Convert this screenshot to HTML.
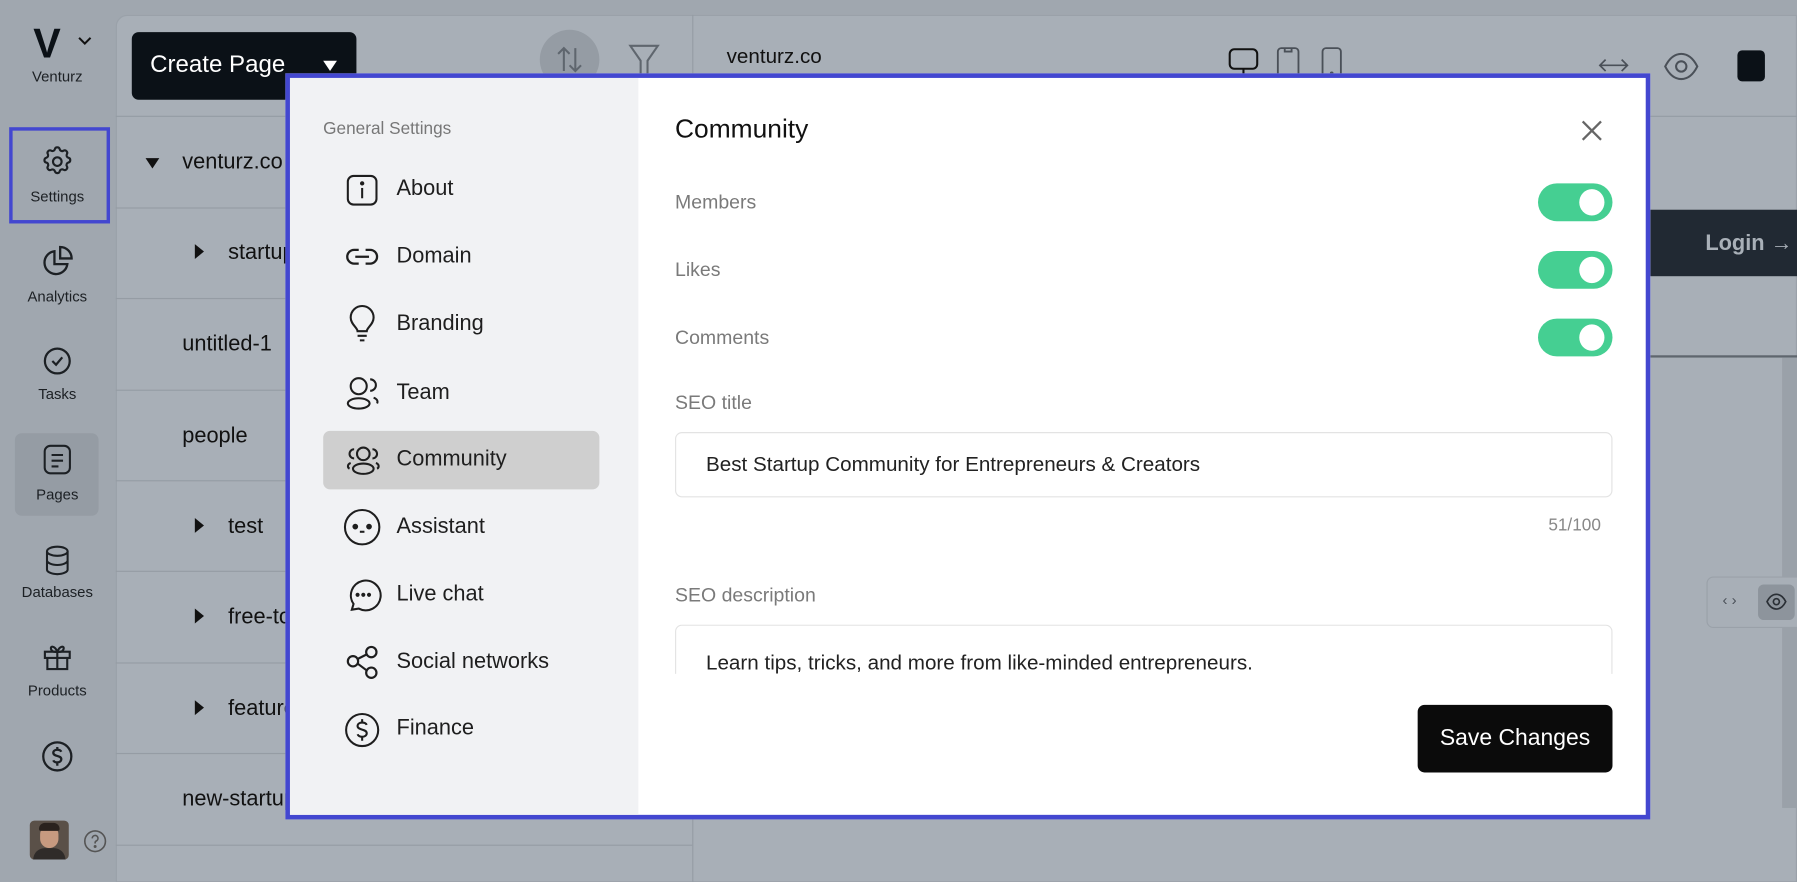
<!DOCTYPE html>
<html><head><meta charset="utf-8"><style>
*{box-sizing:border-box;margin:0;padding:0}
html,body{width:1797px;height:882px;overflow:hidden;background:#a0a7af}
#w{position:absolute;left:0;top:0;width:1568px;height:770px;transform:scale(1.14605);transform-origin:0 0;font-family:"Liberation Sans",sans-serif;background:#a0a7af;overflow:hidden}
.a{position:absolute}
.t{position:absolute;white-space:nowrap}
svg{position:absolute;overflow:visible}
.side{font-size:13px;color:#1c2024;text-align:center;width:100px;left:0}
.mid{font-size:19px;color:#111}
.hl{position:absolute;left:101px;width:503px;height:1px;background:#959ca4}
.mi{font-size:19px;color:#1e1e1e;left:346px}
.lab{font-size:17px;color:#7a7a7a;left:589px}
.tg{position:absolute;left:1342px;width:65px;height:33px;border-radius:17px;background:#45cf92}
.tg:after{content:"";position:absolute;right:7px;top:5px;width:22px;height:23px;border-radius:50%;background:#fff}
</style></head><body><div id="w">
<div class="a" style="left:101px;top:13px;width:1467px;height:757px;background:#a8afb7;border-top-left-radius:10px;border:1px solid #9aa1a9"></div>
<div class="a" style="left:604px;top:13px;width:1px;height:757px;background:#959ca4"></div>
<div class="a" style="left:605px;top:101px;width:963px;height:1px;background:#959ca4"></div>
<div class="hl" style="top:101px"></div><div class="hl" style="top:181px"></div><div class="hl" style="top:260px"></div><div class="hl" style="top:340px"></div><div class="hl" style="top:419px"></div><div class="hl" style="top:498px"></div><div class="hl" style="top:578px"></div><div class="hl" style="top:657px"></div><div class="hl" style="top:737px"></div>
<div class="t" style="left:29px;top:17px;font-size:36px;font-weight:bold;color:#0b1117;letter-spacing:-2px">V</div>
<svg style="left:68px;top:32px" width="12" height="8"><path d="M1 1l5 5 5-5" stroke="#111" stroke-width="1.8" fill="none"/></svg>
<div class="t side" style="top:59px">Venturz</div>
<div class="a" style="left:8px;top:111px;width:88px;height:84px;border:3px solid #4347d0"></div>
<svg style="left:35px;top:126px" width="30" height="30" viewBox="0 0 24 24" fill="none" stroke="#1c2024" stroke-width="1.5"><path d="M10.3 3.3c.4-1.7 2.9-1.7 3.4 0a1.7 1.7 0 0 0 2.6 1.1c1.5-.9 3.3.8 2.4 2.4a1.7 1.7 0 0 0 1 2.5c1.8.4 1.8 2.9 0 3.4a1.7 1.7 0 0 0-1 2.6c.9 1.5-.9 3.3-2.4 2.4a1.7 1.7 0 0 0-2.6 1c-.4 1.800-2.9 1.8-3.4 0a1.7 1.7 0 0 0-2.5-1c-1.6.9-3.3-.9-2.4-2.4a1.7 1.7 0 0 0-1.1-2.6c-1.7-.4-1.7-2.9 0-3.4a1.7 1.7 0 0 0 1.1-2.5c-.9-1.6.8-3.3 2.4-2.4a1.7 1.7 0 0 0 2.5-1.1z"/><circle cx="12" cy="12" r="3"/></svg>
<div class="t side" style="top:164px">Settings</div>
<svg style="left:35px;top:213px" width="30" height="30" viewBox="0 0 24 24" fill="none" stroke="#1c2024" stroke-width="1.6"><path d="M10 5a8 8 0 1 0 9 9h-9z"/><path d="M14 2a8 8 0 0 1 8 8h-8z"/></svg>
<div class="t side" style="top:251px">Analytics</div>
<svg style="left:37px;top:302px" width="26" height="26" viewBox="0 0 24 24" fill="none" stroke="#1c2024" stroke-width="1.8"><circle cx="12" cy="12" r="10"/><path d="M8 12l3 3 5-6"/></svg>
<div class="t side" style="top:336px">Tasks</div>
<div class="a" style="left:13px;top:378px;width:73px;height:72px;background:#959ca4;border-radius:6px"></div>
<svg style="left:38px;top:388px" width="24" height="26" viewBox="0 0 24 26" fill="none" stroke="#1c2024" stroke-width="1.8"><rect x="1" y="1" width="22" height="24" rx="5"/><path d="M7 9h10M7 14h10M7 19h6"/></svg>
<div class="t side" style="top:424px">Pages</div>
<svg style="left:38px;top:476px" width="24" height="26" viewBox="0 0 24 26" fill="none" stroke="#1c2024" stroke-width="1.8"><ellipse cx="12" cy="5" rx="9" ry="4"/><path d="M3 5v16c0 2 4 4 9 4s9-2 9-4V5M3 13c0 2 4 4 9 4s9-2 9-4"/></svg>
<div class="t side" style="top:509px">Databases</div>
<svg style="left:37px;top:560px" width="26" height="26" viewBox="0 0 24 24" fill="none" stroke="#1c2024" stroke-width="1.7"><rect x="2" y="8" width="20" height="5"/><path d="M4 13v9h16v-9M12 8v14M12 8C10 3 6 3 7 6s5 2 5 2c0 0 4 1 5-2s-3-3-5 2"/></svg>
<div class="t side" style="top:595px">Products</div>
<svg style="left:36px;top:646px" width="28" height="28" viewBox="0 0 24 24" fill="none" stroke="#1c2024" stroke-width="1.7"><circle cx="12" cy="12" r="10.5"/><path d="M15 8.5c-.5-1-1.7-1.5-3-1.5-1.8 0-3 1-3 2.3 0 3 6 1.7 6 4.8 0 1.3-1.3 2.4-3 2.4-1.4 0-2.6-.6-3-1.6M12 5v2M12 17v2"/></svg>
<div class="a" style="left:0;top:682px;width:100px;height:20px;background:linear-gradient(#a0a7af00,#a0a7af)"></div>
<div class="a" style="left:26px;top:716px;width:34px;height:34px;border-radius:4px;background:#5a5048;overflow:hidden"><div class="a" style="left:9px;top:4px;width:16px;height:20px;border-radius:8px;background:#c79a80"></div><div class="a" style="left:8px;top:2px;width:18px;height:7px;border-radius:6px 6px 2px 2px;background:#2a221e"></div><div class="a" style="left:3px;top:24px;width:28px;height:14px;border-radius:10px 10px 0 0;background:#2f2b29"></div></div>
<svg style="left:73px;top:724px" width="20" height="20" viewBox="0 0 20 20" fill="none" stroke="#555" stroke-width="1.4"><circle cx="10" cy="10" r="9"/><path d="M7.5 7.5a2.5 2.5 0 1 1 3.5 2.3c-.7.3-1 .8-1 1.5v.7"/><circle cx="10" cy="14.6" r=".6" fill="#555"/></svg>
<div class="a" style="left:115px;top:28px;width:196px;height:59px;background:#0b1117;border-radius:6px"></div>
<div class="t" style="left:131px;top:45px;font-size:21px;color:#fff">Create Page</div>
<svg style="left:282px;top:53px" width="12" height="9"><path d="M0 0h12L6 9z" fill="#fff"/></svg>
<div class="a" style="left:471px;top:26px;width:52px;height:52px;border-radius:50%;background:#959ca4"></div>
<svg style="left:483px;top:38px" width="28" height="28" viewBox="0 0 28 28" fill="none" stroke="#5f666e" stroke-width="1.8"><path d="M9 24V4M4 9l5-5 5 5M19 4v20M14 19l5 5 5-5"/></svg>
<svg style="left:548px;top:38px" width="28" height="30" viewBox="0 0 28 30" fill="none" stroke="#5f666e" stroke-width="1.8"><path d="M2 2h24L17 15v13h-6V15z"/></svg>
<svg style="left:127px;top:138px" width="12" height="9"><path d="M0 0h12L6 9z" fill="#111"/></svg>
<div class="t mid" style="left:159px;top:131px">venturz.co</div>
<svg style="left:170px;top:213px" width="8" height="13"><path d="M0 0v13l8-6.5z" fill="#111"/></svg>
<div class="t mid" style="left:199px;top:210px">startup</div>
<div class="t mid" style="left:159px;top:290px">untitled-1</div>
<div class="t mid" style="left:159px;top:370px">people</div>
<svg style="left:170px;top:452px" width="8" height="13"><path d="M0 0v13l8-6.5z" fill="#111"/></svg>
<div class="t mid" style="left:199px;top:449px">test</div>
<svg style="left:170px;top:531px" width="8" height="13"><path d="M0 0v13l8-6.5z" fill="#111"/></svg>
<div class="t mid" style="left:199px;top:528px">free-tools</div>
<svg style="left:170px;top:611px" width="8" height="13"><path d="M0 0v13l8-6.5z" fill="#111"/></svg>
<div class="t mid" style="left:199px;top:608px">features</div>
<div class="t mid" style="left:159px;top:687px">new-startup</div>
<div class="t" style="left:634px;top:39px;font-size:18px;color:#111">venturz.co</div>
<svg style="left:1072px;top:42px" width="26" height="24" viewBox="0 0 26 24" fill="none" stroke="#111" stroke-width="1.8"><rect x="1" y="1" width="24" height="17" rx="4"/><path d="M13 18v6"/></svg>
<svg style="left:1114px;top:41px" width="20" height="28" viewBox="0 0 20 28" fill="none" stroke="#4a5058" stroke-width="1.6"><rect x="1" y="1" width="18" height="28" rx="3"/><path d="M7 1v3h6V1"/></svg>
<svg style="left:1153px;top:41px" width="18" height="28" viewBox="0 0 18 28" fill="none" stroke="#4a5058" stroke-width="1.6"><rect x="1" y="1" width="16" height="28" rx="3"/><circle cx="9" cy="23" r=".8" fill="#4a5058"/></svg>
<svg style="left:1395px;top:50px" width="26" height="14" viewBox="0 0 26 14" fill="none" stroke="#4a5058" stroke-width="1.5"><path d="M2 7h22M6 2L1 7l5 5M20 2l5 5-5 5"/></svg>
<svg style="left:1452px;top:45px" width="30" height="26" viewBox="0 0 30 26" fill="none" stroke="#4a5058" stroke-width="1.8"><path d="M1 13C5 5 10 2 15 2s10 3 14 11c-4 8-9 11-14 11S5 21 1 13z"/><circle cx="15" cy="13" r="4.5"/></svg>
<div class="a" style="left:1516px;top:44px;width:24px;height:27px;border-radius:4px;background:#0b1117"></div>
<div class="a" style="left:1440px;top:183px;width:128px;height:58px;background:#212933"></div>
<div class="t" style="left:1488px;top:202px;font-size:19px;font-weight:bold;color:#a9b0b8">Login →</div>
<div class="a" style="left:1440px;top:310px;width:128px;height:2px;background:#5f666e"></div>
<div class="a" style="left:1555px;top:312px;width:13px;height:393px;background:#9aa1a9"></div>
<div class="a" style="left:1489px;top:503px;width:90px;height:45px;border:1px solid #9aa1a9;border-radius:6px;background:#a8afb7"></div>
<div class="t" style="left:1503px;top:516px;font-size:13px;color:#4a5058">‹ ›</div>
<div class="a" style="left:1534px;top:510px;width:32px;height:31px;border-radius:5px;background:#8d949c"></div>
<svg style="left:1541px;top:518px" width="18" height="14" viewBox="0 0 30 24" fill="none" stroke="#2a2f35" stroke-width="2.5"><path d="M1 12C5 4 10 1 15 1s10 3 14 11c-4 8-9 11-14 11S5 20 1 12z"/><circle cx="15" cy="12" r="4.5"/></svg>
<div class="a" style="left:249px;top:64px;width:1191px;height:651px;border:4px solid #4347d0;background:#fff;overflow:hidden">
 <div class="a" style="left:0;top:0;width:304px;height:643px;background:#f1f2f4"></div>
</div>
<div class="t" style="left:282px;top:104px;font-size:15px;color:#777">General Settings</div>
<div class="a" style="left:282px;top:376px;width:241px;height:51px;background:#cfcfcf;border-radius:6px"></div>
<svg style="left:302px;top:152px" width="28" height="28" viewBox="0 0 28 28" fill="none" stroke="#1e1e1e" stroke-width="1.8"><rect x="1.5" y="1.5" width="25" height="25" rx="5"/><path d="M14 12v9"/><circle cx="14" cy="8" r="1" fill="#1e1e1e"/></svg>
<div class="t mi" style="top:154px">About</div>
<svg style="left:302px;top:216px" width="28" height="16" viewBox="0 0 28 16" fill="none" stroke="#1e1e1e" stroke-width="2"><path d="M11 2H7a6 6 0 0 0 0 12h4M17 2h4a6 6 0 0 1 0 12h-4M8 8h12"/></svg>
<div class="t mi" style="top:213px">Domain</div>
<svg style="left:305px;top:268px" width="22" height="30" viewBox="0 0 22 30" fill="none" stroke="#1e1e1e" stroke-width="1.8"><path d="M7 21c0-3-6-6-6-12a10 10 0 0 1 20 0c0 6-6 9-6 12z"/><path d="M7 25h8M9 29h4"/></svg>
<div class="t mi" style="top:272px">Branding</div>
<svg style="left:302px;top:328px" width="30" height="30" viewBox="0 0 30 30" fill="none" stroke="#1e1e1e" stroke-width="1.8"><circle cx="11" cy="9" r="7"/><ellipse cx="11" cy="24" rx="9.5" ry="4.5"/><path d="M21 3a5 5 0 0 1 0 10M24 19c3 1 4 3 3 5"/></svg>
<div class="t mi" style="top:332px">Team</div>
<svg style="left:302px;top:389px" width="30" height="26" viewBox="0 0 30 26" fill="none" stroke="#1e1e1e" stroke-width="1.8"><circle cx="15" cy="7" r="5.5"/><ellipse cx="15" cy="20" rx="9" ry="4.5"/><path d="M7 3a4 4 0 0 0 0 8M23 3a4 4 0 0 1 0 8M4 15c-3 1-3 4-1 5M26 15c3 1 3 4 1 5"/></svg>
<div class="t mi" style="top:390px">Community</div>
<svg style="left:300px;top:444px" width="32" height="32" viewBox="0 0 32 32" fill="none" stroke="#1e1e1e" stroke-width="1.8"><circle cx="16" cy="16" r="15"/><circle cx="10" cy="15.5" r="1.6" fill="#1e1e1e"/><circle cx="22" cy="15.5" r="1.6" fill="#1e1e1e"/><path d="M14 20h4"/></svg>
<div class="t mi" style="top:449px">Assistant</div>
<svg style="left:303px;top:505px" width="28" height="28" viewBox="0 0 28 28" fill="none" stroke="#1e1e1e" stroke-width="1.8"><path d="M4 27l1.5-5A13 13 0 1 1 10 26z"/><circle cx="9" cy="14" r=".9" fill="#1e1e1e"/><circle cx="14" cy="14" r=".9" fill="#1e1e1e"/><circle cx="19" cy="14" r=".9" fill="#1e1e1e"/></svg>
<div class="t mi" style="top:508px">Live chat</div>
<svg style="left:302px;top:563px" width="30" height="30" viewBox="0 0 30 30" fill="none" stroke="#1e1e1e" stroke-width="1.9"><circle cx="6" cy="14" r="4.5"/><circle cx="22" cy="6" r="4.5"/><circle cx="22" cy="24" r="4.5"/><path d="M10 12l8-4M10 16l8 6"/></svg>
<div class="t mi" style="top:567px">Social networks</div>
<svg style="left:301px;top:622px" width="30" height="30" viewBox="0 0 30 30" fill="none" stroke="#1e1e1e" stroke-width="1.8"><circle cx="15" cy="15" r="14"/><path d="M19 10.5c-.6-1.3-2.1-2-4-2-2.3 0-4 1.2-4 3 0 4 8 2.2 8 6.3 0 1.8-1.7 3.1-4 3.1-1.9 0-3.4-.8-4-2.2M15 5.5v3M15 20.9v3.5"/></svg>
<div class="t mi" style="top:625px">Finance</div>
<div class="t" style="left:589px;top:99px;font-size:23px;color:#111">Community</div>
<svg style="left:1380px;top:105px" width="18" height="18" viewBox="0 0 18 18" stroke="#666" stroke-width="2"><path d="M1 1l16 16M17 1L1 17"/></svg>
<div class="t lab" style="top:167px">Members</div><div class="tg" style="top:160px"></div>
<div class="t lab" style="top:226px">Likes</div><div class="tg" style="top:219px"></div>
<div class="t lab" style="top:285px">Comments</div><div class="tg" style="top:278px"></div>
<div class="t lab" style="top:342px">SEO title</div>
<div class="a" style="left:589px;top:377px;width:818px;height:57px;border:1px solid #e3e3e3;border-radius:6px"></div>
<div class="t" style="left:616px;top:395px;font-size:18px;color:#222">Best Startup Community for Entrepreneurs &amp; Creators</div>
<div class="t" style="left:1351px;top:450px;font-size:15px;color:#888">51/100</div>
<div class="t lab" style="top:510px">SEO description</div>
<div class="a" style="left:589px;top:545px;width:818px;height:43px;overflow:hidden"><div class="a" style="left:0;top:0;width:818px;height:80px;border:1px solid #e3e3e3;border-radius:6px"></div><div class="t" style="left:27px;top:23px;font-size:18px;color:#222">Learn tips, tricks, and more from like-minded entrepreneurs.</div></div>
<div class="a" style="left:1237px;top:615px;width:170px;height:59px;background:#0b0b0b;border-radius:6px"></div>
<div class="t" style="left:1237px;top:633px;width:170px;text-align:center;font-size:20px;color:#fff">Save Changes</div>
</div></body></html>
